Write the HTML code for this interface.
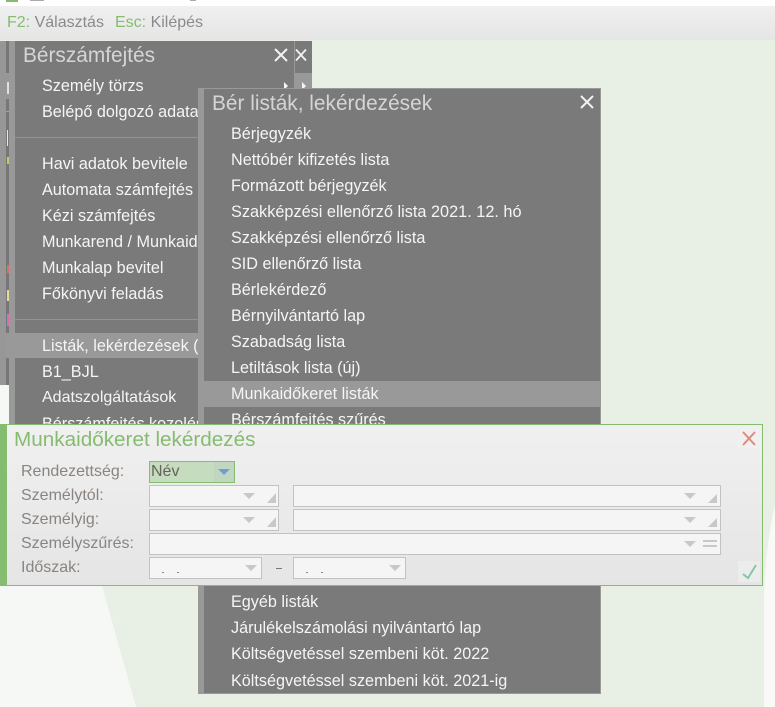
<!DOCTYPE html>
<html><head><meta charset="utf-8">
<style>
html,body{margin:0;padding:0}
body{width:775px;height:707px;position:relative;overflow:hidden;background:#e8f0e5;font-family:"Liberation Sans",sans-serif}
.a{position:absolute}
.t{position:absolute;white-space:nowrap;line-height:20px;font-size:16.2px;color:#f5f5f5}
.h{position:absolute;white-space:nowrap;line-height:26px;font-size:20.85px;color:#d5d5d5}
.l{position:absolute;white-space:nowrap;line-height:20px;font-size:16px;color:#8a8480;left:21px}
.i{position:absolute;box-sizing:border-box;background:#f5f5f5;border:1px solid #c2c2c2;height:22px}
svg{position:absolute;overflow:visible}
</style></head><body>
<svg style="left:0;top:0" width="775" height="707">
<polygon points="0,222 136,707 0,707" fill="#f6f8f5"/>
<path d="M775,505 C768,535 764,570 764,610 L764,707 L775,707 Z" fill="#f9faf8"/>
</svg>
<div class="a" style="left:0;top:0;width:775px;height:6px;background:#fff"></div>
<div class="a" style="left:6px;top:0;width:12px;height:2px;background:#85bc6f"></div>
<div class="a" style="left:30px;top:0;width:14px;height:1px;background:#aaa"></div>
<div class="a" style="left:190px;top:0;width:6px;height:1px;background:#aaa"></div>
<div class="a" style="left:0;top:6px;width:775px;height:34px;background:linear-gradient(#f0f0f0,#e5e5e5)"></div>
<div class="a" style="left:7px;top:13px;font-size:16px;line-height:20px;white-space:nowrap;color:#8a8a8a"><span style="color:#85bc6f">F2:</span> Választás</div>
<div class="a" style="left:115px;top:13px;font-size:16px;line-height:20px;white-space:nowrap;color:#8a8a8a"><span style="color:#85bc6f">Esc:</span> Kilépés</div>

<!-- left stack -->
<div class="a" style="left:0;top:41px;width:15px;height:344px;background:#979797"></div>
<div class="a" style="left:6px;top:41px;width:3px;height:32px;background:#777"></div>
<div class="a" style="left:6px;top:99px;width:3px;height:286px;background:#777"></div>
<div class="a" style="left:6px;top:333px;width:3px;height:25px;background:#999"></div>
<div class="a" style="left:9px;top:41px;width:6px;height:383px;background:#999"></div>
<div class="a" style="left:7px;top:82px;width:2px;height:12px;background:#e0e0e0"></div>
<div class="a" style="left:6px;top:111px;width:3px;height:1px;background:#85bc6f"></div>
<div class="a" style="left:7px;top:130px;width:1px;height:16px;background:#e8e8e8"></div>
<div class="a" style="left:7px;top:157px;width:2px;height:7px;background:#c8c860"></div>
<div class="a" style="left:7px;top:265px;width:2px;height:8px;background:#d8705a"></div>
<div class="a" style="left:7px;top:290px;width:2px;height:11px;background:#e8d8a0"></div>
<div class="a" style="left:7px;top:314px;width:2px;height:12px;background:#d870b0"></div>

<!-- back panel -->
<div class="a" style="left:294px;top:41px;width:18px;height:48px;background:#999"></div>
<div class="a" style="left:295px;top:41px;width:17px;height:32px;background:#7a7a7a"></div>
<div class="a" style="left:302px;top:82px;width:0;height:0;border-left:4px solid #f5f5f5;border-top:4px solid transparent;border-bottom:4px solid transparent"></div>

<!-- panel 1 -->
<div class="a" style="left:15px;top:41px;width:279px;height:385px;background:#7a7a7a"></div>
<div class="a" style="left:15px;top:137px;width:183px;height:1px;background:#7fa36a"></div>
<div class="a" style="left:15px;top:319px;width:183px;height:1px;background:#7fa36a"></div>
<div class="a" style="left:15px;top:333px;width:183px;height:25px;background:#999"></div>
<div class="h" style="left:23px;top:43px">Bérszámfejtés</div>
<div class="t" style="left:42px;top:76px">Személy törzs</div>
<div class="t" style="left:42px;top:102px">Belépő dolgozó adatai</div>
<div class="t" style="left:42px;top:154px">Havi adatok bevitele</div>
<div class="t" style="left:42px;top:180px">Automata számfejtés</div>
<div class="t" style="left:42px;top:206px">Kézi számfejtés</div>
<div class="t" style="left:42px;top:232px">Munkarend / Munkaidő</div>
<div class="t" style="left:42px;top:258px">Munkalap bevitel</div>
<div class="t" style="left:42px;top:284px">Főkönyvi feladás</div>
<div class="t" style="left:42px;top:336px">Listák, lekérdezések (</div>
<div class="t" style="left:42px;top:362px">B1_BJL</div>
<div class="t" style="left:42px;top:388px;font-size:16px">Adatszolgáltatások</div>
<div class="t" style="left:42px;top:414px">Bérszámfejtés kozolés</div>
<div class="a" style="left:284px;top:82px;width:0;height:0;border-left:4px solid #f5f5f5;border-top:4px solid transparent;border-bottom:4px solid transparent"></div>
<svg style="left:274px;top:48px" width="14" height="14"><path d="M1,1 L13,13 M13,1 L1,13" stroke="#f2f2f2" stroke-width="2" fill="none"/></svg>
<svg style="left:295px;top:48px" width="12" height="14"><path d="M1,1.500 L11,12.500 M11,1.500 L1,12.500" stroke="#f2f2f2" stroke-width="1.800" fill="none"/></svg>

<!-- panel 3 -->
<div class="a" style="left:198px;top:88px;width:403px;height:606px;background:#999"></div>
<div class="a" style="left:204px;top:89px;width:396px;height:604px;background:#7a7a7a"></div>
<div class="a" style="left:204px;top:381px;width:396px;height:26px;background:#999"></div>
<div class="h" style="left:212px;top:91px">Bér listák, lekérdezések</div>
<svg style="left:580px;top:95px" width="14" height="14"><path d="M1,1 L13,13 M13,1 L1,13" stroke="#f2f2f2" stroke-width="2" fill="none"/></svg>
<div class="t" style="left:231px;top:124px">Bérjegyzék</div>
<div class="t" style="left:231px;top:150px">Nettóbér kifizetés lista</div>
<div class="t" style="left:231px;top:176px">Formázott bérjegyzék</div>
<div class="t" style="left:231px;top:202px;font-size:16.3px">Szakképzési ellenőrző lista 2021. 12. hó</div>
<div class="t" style="left:231px;top:228px">Szakképzési ellenőrző lista</div>
<div class="t" style="left:231px;top:254px">SID ellenőrző lista</div>
<div class="t" style="left:231px;top:280px">Bérlekérdező</div>
<div class="t" style="left:231px;top:306px">Bérnyilvántartó lap</div>
<div class="t" style="left:231px;top:332px">Szabadság lista</div>
<div class="t" style="left:231px;top:358px">Letiltások lista (új)</div>
<div class="t" style="left:231px;top:384px">Munkaidőkeret listák</div>
<div class="t" style="left:231px;top:410px">Bérszámfejtés szűrés</div>
<div class="t" style="left:231px;top:592px">Egyéb listák</div>
<div class="t" style="left:231px;top:618px">Járulékelszámolási nyilvántartó lap</div>
<div class="t" style="left:231px;top:644px">Költségvetéssel szembeni köt. 2022</div>
<div class="t" style="left:231px;top:671px">Költségvetéssel szembeni köt. 2021-ig</div>

<!-- dialog -->
<div class="a" style="left:0;top:424px;width:6px;height:162px;background:#85bc6f"></div>
<div class="a" style="left:6px;top:424px;width:757px;height:162px;box-sizing:border-box;border:1px solid #85bc6f;background:linear-gradient(#f0f0f0,#e5e5e5)"></div>
<div class="a" style="left:14px;top:427px;font-size:20.7px;line-height:26px;color:#85bc6f;white-space:nowrap">Munkaidőkeret lekérdezés</div>
<div class="l" style="top:462px">Rendezettség:</div>
<div class="l" style="top:486px">Személytól:</div>
<div class="l" style="top:510px">Személyig:</div>
<div class="l" style="top:534px">Személyszűrés:</div>
<div class="l" style="top:558px">Időszak:</div>

<div class="i" style="left:149px;top:461px;width:86px;background:#c6dcbe;border-color:#85bc6f"></div>
<div class="a" style="left:214px;top:462px;width:20px;height:20px;background:#c0d6c0"></div>
<div class="a" style="left:151px;top:461px;font-size:16px;line-height:21px;color:#66625e">Név</div>
<svg style="left:218px;top:469px" width="13" height="7"><path d="M0,0 H12 L6,6 Z" fill="#6f9fd2"/></svg>

<div class="i" style="left:149px;top:485px;width:130px"></div>
<div class="i" style="left:293px;top:485px;width:428px"></div>
<div class="i" style="left:149px;top:509px;width:130px"></div>
<div class="i" style="left:293px;top:509px;width:428px"></div>
<div class="i" style="left:149px;top:533px;width:572px"></div>
<div class="i" style="left:149px;top:557px;width:113px"></div>
<div class="i" style="left:293px;top:557px;width:113px"></div>

<svg style="left:0;top:0" width="775" height="707">
<g fill="#c8c8c8">
<path d="M243,493 H255 L249,499 Z"/><path d="M684,493 H696 L690,499 Z"/>
<path d="M243,517 H255 L249,523 Z"/><path d="M684,517 H696 L690,523 Z"/>
<path d="M684,541 H696 L690,547 Z"/>
<path d="M245,565 H257 L251,571 Z"/><path d="M389,565 H401 L395,571 Z"/>
<path d="M276,493 V503 H267 Z"/><path d="M717,494 V503 H708 Z"/>
<path d="M276,517 V527 H267 Z"/><path d="M717,518 V527 H708 Z"/>
<rect x="703" y="540" width="14" height="2"/><rect x="703" y="545" width="14" height="2"/>
</g>
<rect x="276" y="568" width="6" height="1" fill="#777"/>
<g fill="#888"><rect x="162" y="572" width="2" height="1"/><rect x="177" y="572" width="2" height="1"/><rect x="306" y="572" width="2" height="1"/><rect x="321" y="572" width="2" height="1"/></g>
<rect x="738" y="428" width="22" height="21" fill="#f0f0f0" opacity=".6"/>
<path d="M743,432 L755,445 M755,432 L743,445" stroke="#e08a78" stroke-width="2" fill="none"/>
<rect x="738" y="561" width="22" height="21" fill="#f0f0f0" opacity=".6"/>
<path d="M743,574 L748,578 L756,565" stroke="#84c8a8" stroke-width="2" fill="none"/>
</svg>
</body></html>
